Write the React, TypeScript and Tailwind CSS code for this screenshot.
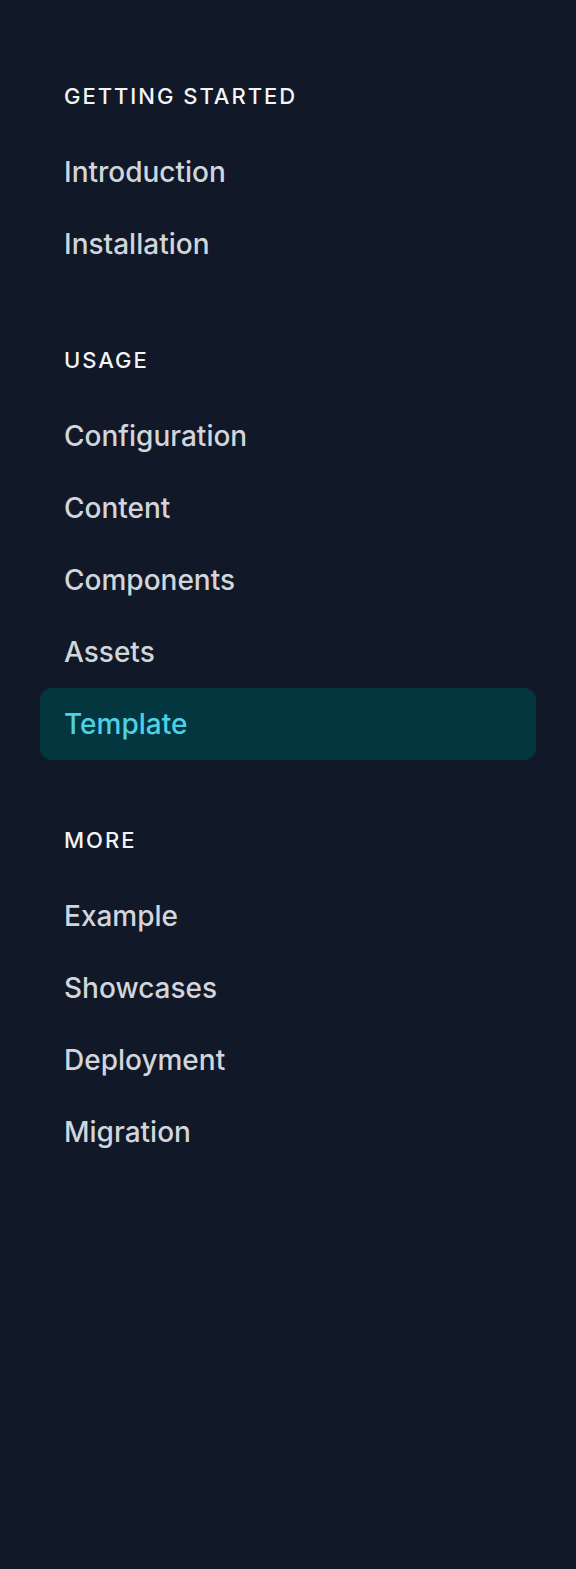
import React from "react";

const sections = [
  { title: "GETTING STARTED", items: ["Introduction", "Installation"] },
  { title: "USAGE", items: ["Configuration", "Content", "Components", "Assets", "Template"] },
  { title: "MORE", items: ["Example", "Showcases", "Deployment", "Migration"] },
];

export default function App() {
  return (
    <div className="min-h-[1569px] w-[576px] bg-[#111827] px-10 pt-[82px]" style={{ fontFamily: "Inter, 'Noto Sans', sans-serif" }}>
      <nav className="flex flex-col gap-[66px]">
        {sections.map((s) => (
          <div key={s.title} className="flex flex-col">
            <h3 className="mb-[26px] px-6 text-[22px] leading-7 font-medium tracking-[0.09em] text-gray-100">{s.title}</h3>
            <ul className="flex flex-col">
              {s.items.map((it) => {
                const active = it === "Template";
                return (
                  <li key={it}>
                    <a
                      className={
                        active
                          ? "flex h-[72px] items-center rounded-xl bg-[#04363f] px-6 text-[28px] font-medium text-[#4fd1e5]"
                          : "flex h-[72px] items-center rounded-xl px-6 text-[28px] font-medium text-gray-300"
                      }
                    >
                      {it}
                    </a>
                  </li>
                );
              })}
            </ul>
          </div>
        ))}
      </nav>
    </div>
  );
}
